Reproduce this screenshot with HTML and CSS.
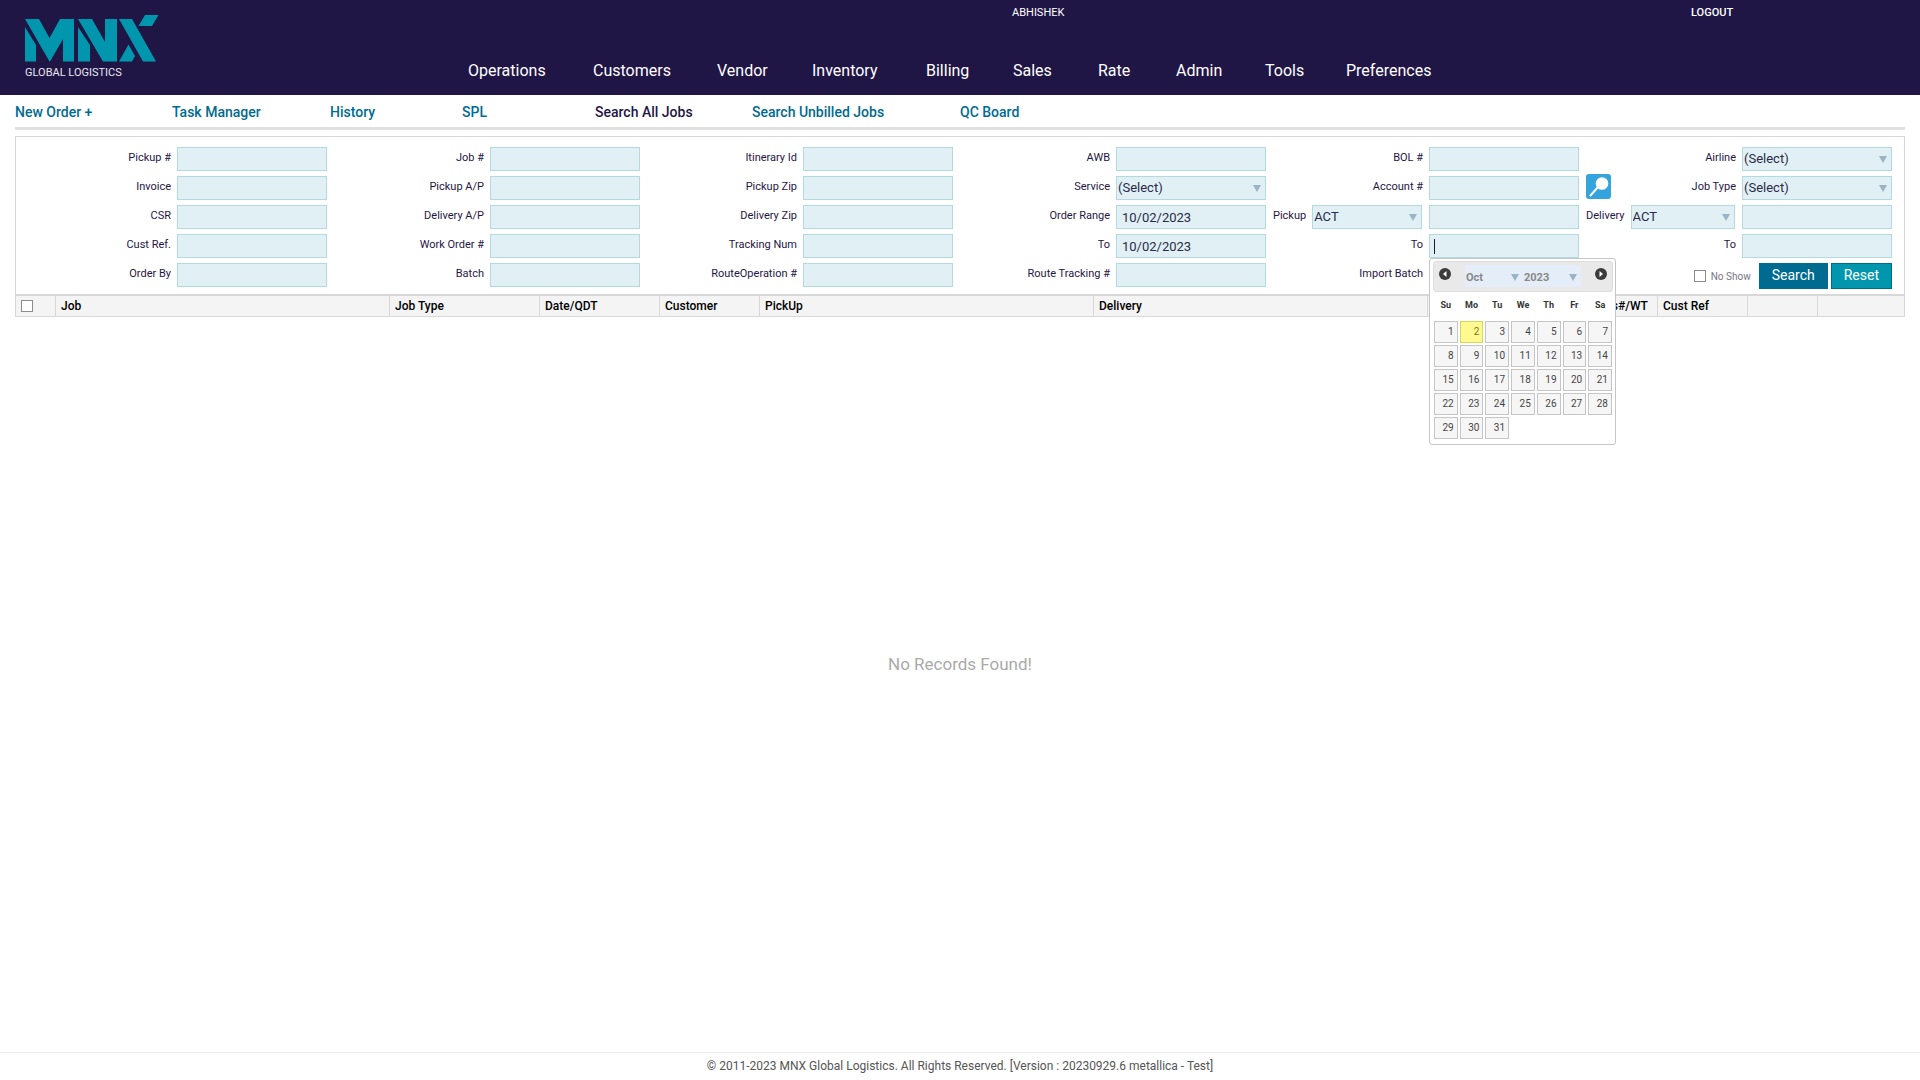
FILE: index.html
```html
<!DOCTYPE html>
<html lang="en">
<head>
<meta charset="utf-8">
<title>Search All Jobs - MNX Global Logistics</title>
<link rel="stylesheet" href="styles.css">
</head>
<body>
<header class="header">
  <a class="logo" href="#" aria-label="MNX home">
    <svg class="logo-mark" viewBox="0 0 134 47" width="134" height="47" fill="#0097ae" aria-hidden="true">
      <path d="M0 12 11 30V46.500H0ZM0 4H14L24.500 23 35 4H49V46.500H38V24L25 46.500H24.500Z"/>
      <path d="M53 12 65 30V46.500H53ZM53 4H67L80 27V4H92V46.500H78Z"/>
      <path d="M94 4H107L131 46.500H118ZM94 46.500 103.500 29.500 110 41 107 46.500ZM120 0H133.500L127 11H113.500Z"/>
    </svg>
    <span class="logo-text">GLOBAL LOGISTICS</span>
  </a>
  <span class="user">ABHISHEK</span>
  <a class="logout" href="#">LOGOUT</a>
  <nav class="nav">
    <a href="#">Operations</a><a href="#">Customers</a><a href="#">Vendor</a><a href="#">Inventory</a><a href="#">Billing</a><a href="#">Sales</a><a href="#">Rate</a><a href="#">Admin</a><a href="#">Tools</a><a href="#">Preferences</a>
  </nav>
</header>
<nav class="subnav">
  <a href="#">New Order +</a><a href="#">Task Manager</a><a href="#">History</a><a href="#">SPL</a><a class="active" href="#">Search All Jobs</a><a href="#">Search Unbilled Jobs</a><a href="#">QC Board</a>
</nav>
<main class="main">
  <form class="filters">
    <div class="cell"><label for="pickup">Pickup #</label><input class="field" id="pickup" type="text"></div>
    <div class="cell"><label for="job">Job #</label><input class="field" id="job" type="text"></div>
    <div class="cell"><label for="itin">Itinerary Id</label><input class="field" id="itin" type="text"></div>
    <div class="cell"><label for="awb">AWB</label><input class="field" id="awb" type="text"></div>
    <div class="cell"><label for="bol">BOL #</label><input class="field" id="bol" type="text"></div>
    <div class="cell"><label for="airline">Airline</label><span class="select"><select class="field" id="airline"><option>(Select)</option></select></span></div>

    <div class="cell"><label for="invoice">Invoice</label><input class="field" id="invoice" type="text"></div>
    <div class="cell"><label for="pap">Pickup A/P</label><input class="field" id="pap" type="text"></div>
    <div class="cell"><label for="pzip">Pickup Zip</label><input class="field" id="pzip" type="text"></div>
    <div class="cell"><label for="service">Service</label><span class="select"><select class="field" id="service"><option>(Select)</option></select></span></div>
    <div class="cell"><label for="account">Account #</label><input class="field" id="account" type="text"></div>
    <div class="cell"><button class="lookup" type="button" aria-label="Find account"><svg viewBox="0 0 25 25" width="25" height="25" aria-hidden="true"><rect width="25" height="25" rx="3" fill="#35a3dc"/><path d="M12 13 4.500 21.500" stroke="#fff" stroke-width="2" stroke-linecap="round"/><circle cx="16" cy="9.500" r="6.300" fill="#fff"/></svg></button><label for="jobtype">Job Type</label><span class="select"><select class="field" id="jobtype"><option>(Select)</option></select></span></div>

    <div class="cell"><label for="csr">CSR</label><input class="field" id="csr" type="text"></div>
    <div class="cell"><label for="dap">Delivery A/P</label><input class="field" id="dap" type="text"></div>
    <div class="cell"><label for="dzip">Delivery Zip</label><input class="field" id="dzip" type="text"></div>
    <div class="cell"><label for="from">Order Range</label><input class="field" id="from" type="text" value="10/02/2023"></div>
    <div class="cell"><label for="ptype">Pickup</label><span class="select grow"><select class="field" id="ptype"><option>ACT</option></select></span><input class="field" type="text" aria-label="Pickup from"></div>
    <div class="cell"><label for="dtype">Delivery</label><span class="select grow"><select class="field" id="dtype"><option>ACT</option></select></span><input class="field" type="text" aria-label="Delivery from"></div>

    <div class="cell"><label for="cref">Cust Ref.</label><input class="field" id="cref" type="text"></div>
    <div class="cell"><label for="work">Work Order #</label><input class="field" id="work" type="text"></div>
    <div class="cell"><label for="track">Tracking Num</label><input class="field" id="track" type="text"></div>
    <div class="cell"><label for="to">To</label><input class="field" id="to" type="text" value="10/02/2023"></div>
    <div class="cell"><label for="pto">To</label><div class="date"><input class="field" id="pto" type="text"><span class="caret"></span>
      <div class="picker">
        <div class="picker-head">
          <button class="step" type="button" aria-label="Previous month"><svg viewBox="0 0 12 12" width="12" height="12" aria-hidden="true"><circle cx="6" cy="6" r="6" fill="#3c3c3c"/><path d="M7.500 3V9L4 6Z" fill="#fff"/></svg></button>
          <div class="picker-selects"><span class="select"><select class="pick" aria-label="Month"><option>Oct</option></select></span><span class="select"><select class="pick" aria-label="Year"><option>2023</option></select></span></div>
          <button class="step" type="button" aria-label="Next month"><svg viewBox="0 0 12 12" width="12" height="12" aria-hidden="true"><circle cx="6" cy="6" r="6" fill="#3c3c3c"/><path d="M4.500 3V9L8 6Z" fill="#fff"/></svg></button>
        </div>
        <table class="days">
          <thead><tr><th>Su</th><th>Mo</th><th>Tu</th><th>We</th><th>Th</th><th>Fr</th><th>Sa</th></tr></thead>
          <tbody>
            <tr><td><a href="#">1</a></td><td><a class="today" href="#">2</a></td><td><a href="#">3</a></td><td><a href="#">4</a></td><td><a href="#">5</a></td><td><a href="#">6</a></td><td><a href="#">7</a></td></tr>
            <tr><td><a href="#">8</a></td><td><a href="#">9</a></td><td><a href="#">10</a></td><td><a href="#">11</a></td><td><a href="#">12</a></td><td><a href="#">13</a></td><td><a href="#">14</a></td></tr>
            <tr><td><a href="#">15</a></td><td><a href="#">16</a></td><td><a href="#">17</a></td><td><a href="#">18</a></td><td><a href="#">19</a></td><td><a href="#">20</a></td><td><a href="#">21</a></td></tr>
            <tr><td><a href="#">22</a></td><td><a href="#">23</a></td><td><a href="#">24</a></td><td><a href="#">25</a></td><td><a href="#">26</a></td><td><a href="#">27</a></td><td><a href="#">28</a></td></tr>
            <tr><td><a href="#">29</a></td><td><a href="#">30</a></td><td><a href="#">31</a></td><td></td><td></td><td></td><td></td></tr>
          </tbody>
        </table>
      </div></div></div>
    <div class="cell"><label for="dto">To</label><input class="field" id="dto" type="text"></div>

    <div class="cell"><label for="orderby">Order By</label><input class="field" id="orderby" type="text"></div>
    <div class="cell"><label for="batch">Batch</label><input class="field" id="batch" type="text"></div>
    <div class="cell"><label for="routeop">RouteOperation #</label><input class="field" id="routeop" type="text"></div>
    <div class="cell"><label for="routetr">Route Tracking #</label><input class="field" id="routetr" type="text"></div>
    <div class="cell"><label for="import">Import Batch</label><input class="field" id="import" type="text"></div>
    <div class="actions"><label class="noshow"><input class="check" type="checkbox">No Show</label><button class="btn" type="submit">Search</button><button class="btn reset" type="reset">Reset</button></div>
  </form>
  <table class="jobs">
    <colgroup><col class="c-check"><col class="c-wide"><col class="c-type"><col class="c-date"><col class="c-cust"><col class="c-wide"><col class="c-wide"><col class="c-status"><col class="c-pcs"><col class="c-ref"><col class="c-extra"><col></colgroup>
    <thead><tr><th><input class="check" type="checkbox" aria-label="Select all"></th><th>Job</th><th>Job Type</th><th>Date/QDT</th><th>Customer</th><th>PickUp</th><th>Delivery</th><th></th><th>Pcs#/WT</th><th>Cust Ref</th><th></th><th></th></tr></thead>
  </table>
  <p class="empty">No Records Found!</p>
</main>
<footer class="footer">© 2011-2023 MNX Global Logistics. All Rights Reserved. [Version : 20230929.6 metallica - Test]</footer>
</body>
</html>
```
FILE: styles.css
```css
* { box-sizing: border-box; }

body {
  margin: 0;
  min-height: 100vh;
  display: flex;
  flex-direction: column;
  background: #fff;
  color: #1f1645;
  font-family: Roboto, "Liberation Sans", sans-serif;
  font-size: 11px;
}

a { text-decoration: none; color: inherit; }
button, input, select { font-family: inherit; margin: 0; }

/* Header */
.header {
  display: grid;
  grid-template-columns: 468fr 544fr 679fr 229fr;
  grid-template-rows: 25px 70px;
  background: #201646;
  color: #fff;
}
.logo {
  grid-row: 1 / 3;
  padding: 15px 0 0 25px;
  display: flex;
  flex-direction: column;
  gap: 4px;
}
.logo-text { font-size: 11px; line-height: 13px; color: #e8e6f0; }
.user, .logout { font-size: 11px; line-height: 25px; }
.user { grid-column: 3; }
.logout { grid-column: 4; font-weight: 500; }
.nav {
  grid-column: 2 / 5;
  grid-row: 2;
  display: grid;
  grid-template-columns: 125px 124px 95px 114px 87px 85px 78px 89px 81px auto;
  justify-content: start;
  padding-top: 36px;
  font-size: 16px;
  line-height: 20px;
}

/* Sub navigation */
.subnav {
  display: grid;
  grid-template-columns: 157px 158px 132px 133px 157px 208px auto;
  justify-content: start;
  margin: 0 15px;
  height: 35px;
  border-bottom: 3px solid #e0e0e0;
  color: #006b91;
  font-size: 14px;
  font-weight: 500;
  line-height: 34px;
}
.subnav .active { color: #1f1645; }

.main {
  flex: 1;
  display: flex;
  flex-direction: column;
  margin: 6px 15px 0;
}

/* Filters */
.filters {
  display: grid;
  grid-template-columns: 311fr repeat(5, 313fr);
  row-gap: 5px;
  padding: 10px 12px 5px 0;
  border: 1px solid #d8d8d8;
}
.cell {
  display: flex;
  justify-content: flex-end;
  height: 24px;
  padding-left: 7px;
}
.cell label { line-height: 22px; margin-right: 6px; white-space: nowrap; }
.field {
  display: block;
  width: 150px;
  height: 24px;
  padding: 0 5px;
  border: 1px solid #b3dade;
  border-radius: 0;
  background: #e0f0f4;
  color: #2b2a4a;
  font-size: 13px;
  outline: none;
}
.select { position: relative; display: block; }
.select::after {
  content: "";
  position: absolute;
  right: 5px;
  top: 9px;
  border: 4px solid transparent;
  border-top: 7px solid #9ab3c5;
  border-bottom: 0;
  pointer-events: none;
}
.select select { appearance: none; padding: 0 1px 2px; }
.grow { flex: 1; margin-right: 7px; }
.grow .field { width: 100%; }
.lookup {
  width: 25px;
  height: 25px;
  margin: -2px auto 0 0;
  padding: 0;
  border: 0;
  background: none;
}
.lookup svg { display: block; }
.actions { display: flex; justify-content: flex-end; gap: 3px; }
.noshow {
  display: flex;
  align-items: center;
  gap: 5px;
  margin-right: 5px;
  color: #77757f;
  font-size: 10px;
}
.check {
  appearance: none;
  display: block;
  width: 12px;
  height: 12px;
  border: 1px solid #8c8c8c;
  background: #fff;
}
.btn {
  height: 26px;
  padding: 0 12px 2px;
  border: 1px solid #006b91;
  background: #006b91;
  color: #fff;
  font-size: 14px;
}
.reset { background: #0097ae; }

/* Date picker */
.date { position: relative; }
.caret {
  position: absolute;
  left: 5px;
  top: 5px;
  width: 1px;
  height: 15px;
  background: #1f1645;
}
.picker {
  position: absolute;
  z-index: 2;
  top: 24px;
  left: 0;
  width: 187px;
  padding: 2px 2px 4px 3px;
  border: 1px solid #c5c5c5;
  border-radius: 3px;
  background: #fff;
}
.picker-head {
  display: flex;
  justify-content: space-between;
  height: 31px;
  padding: 3px 5px;
  border: 1px solid #ddd;
  border-radius: 3px;
  background: #e9e9e9;
}
.step { height: 18px; padding: 0; border: 0; background: none; }
.step svg { display: block; }
.picker-selects { display: flex; background: #e5edf9; height: 22px; }
.picker-selects .select::after { right: 4px; }
.picker-selects .pick {
  display: block;
  width: 58px;
  height: 22px;
  padding: 2px 1px 0;
  border: 0;
  background: none;
  color: #888;
  font-size: 11px;
  font-weight: 700;
}
.days {
  width: 100%;
  table-layout: fixed;
  border-collapse: separate;
  border-spacing: 0;
  font-size: 10px;
}
.days th { height: 28px; padding: 0 0 2px; color: #333; font-size: 9px; }
.days td { padding: 1px; height: 24px; }
.days a {
  display: block;
  height: 22px;
  padding-right: 3px;
  border: 1px solid #c5c5c5;
  background: #f6f6f6;
  color: #454545;
  line-height: 19px;
  text-align: right;
}
.days .today { border-color: #dad55e; background: #fffa90; color: #777620; }

/* Results */
.jobs {
  width: 100%;
  table-layout: fixed;
  border-collapse: separate;
  border-spacing: 0;
  border-left: 1px solid #d8d8d8;
}
.jobs th {
  height: 22px;
  padding: 0 5px;
  border: 1px solid #d8d8d8;
  border-left: 0;
  background: #f4f4f4;
  color: #000;
  font-size: 12px;
  font-weight: 500;
  text-align: left;
}
.c-check { width: 40px; }
.c-wide { width: 334px; }
.c-type { width: 150px; }
.c-date { width: 120px; }
.c-cust { width: 100px; }
.c-status { width: 165px; }
.c-pcs { width: 65px; }
.c-ref { width: 90px; }
.c-extra { width: 70px; }
.empty {
  margin: auto;
  padding-bottom: 42px;
  color: #aaa;
  font-size: 17px;
}
.footer {
  height: 28px;
  border-top: 1px solid #ececf0;
  color: #555;
  font-size: 12px;
  line-height: 26px;
  text-align: center;
}
```
